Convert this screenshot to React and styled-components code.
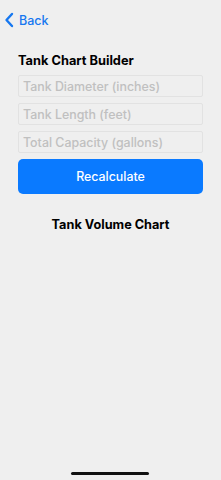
import React from "react";
import styled, { createGlobalStyle } from "styled-components";

const Global = createGlobalStyle`
  html, body { margin: 0; padding: 0; background: #efefef; }
  body { font-family: "Inter", "Liberation Sans", Arial, sans-serif; -webkit-font-smoothing: antialiased; }
  * { box-sizing: border-box; }
`;

const Screen = styled.div`
  width: 221px;
  height: 480px;
  background: #efefef;
  display: flex;
  flex-direction: column;
  position: relative;
  overflow: hidden;
`;

const NavBar = styled.div`
  display: flex;
  align-items: center;
  height: 40px;
  padding: 0 0 0 4px;
`;

const BackButton = styled.button`
  display: flex;
  align-items: center;
  gap: 5px;
  border: none;
  background: none;
  padding: 0;
  color: #1677f0;
  font-family: inherit;
  font-size: 12.5px;
  font-weight: 500;
  cursor: pointer;
`;

const Content = styled.div`
  display: flex;
  flex-direction: column;
  padding: 11px 18px 0 18px;
`;

const Title = styled.h1`
  margin: 0 0 4px 0;
  font-size: 12.8px;
  font-weight: 700;
  color: #000;
  line-height: 20px;
`;

const Fields = styled.div`
  display: flex;
  flex-direction: column;
  gap: 6px;
`;

const Input = styled.input`
  height: 22px;
  width: 100%;
  border: 1px solid #e2e2e2;
  border-radius: 2px;
  background: #efefef;
  padding: 0 4px;
  font-family: inherit;
  font-size: 12.4px;
  font-weight: 500;
  color: #000;
  outline: none;
  &::placeholder { color: #c0c0c0; }
`;

const PrimaryButton = styled.button`
  margin-top: 6px;
  height: 35px;
  width: 100%;
  border: none;
  border-radius: 5px;
  background: #0a7aff;
  color: #fff;
  font-family: inherit;
  font-size: 12.4px;
  font-weight: 500;
  cursor: pointer;
`;

const SectionTitle = styled.h2`
  margin: 22px 0 0 0;
  text-align: center;
  font-size: 12.7px;
  font-weight: 700;
  color: #000;
  line-height: 18px;
`;

const HomeIndicator = styled.div`
  position: absolute;
  left: 71px;
  bottom: 5px;
  width: 78px;
  height: 3.5px;
  border-radius: 2px;
  background: #111;
`;

export default function App() {
  return (
    <Screen>
      <Global />
      <NavBar>
        <BackButton>
          <svg width="10" height="16" viewBox="0 0 10 16">
            <path d="M8 2 L2.5 8 L8 14" fill="none" stroke="#1677f0" strokeWidth="2.4" strokeLinecap="round" strokeLinejoin="round" />
          </svg>
          Back
        </BackButton>
      </NavBar>
      <Content>
        <Title>Tank Chart Builder</Title>
        <Fields>
          <Input placeholder="Tank Diameter (inches)" />
          <Input placeholder="Tank Length (feet)" />
          <Input placeholder="Total Capacity (gallons)" />
        </Fields>
        <PrimaryButton>Recalculate</PrimaryButton>
        <SectionTitle>Tank Volume Chart</SectionTitle>
      </Content>
      <HomeIndicator />
    </Screen>
  );
}
